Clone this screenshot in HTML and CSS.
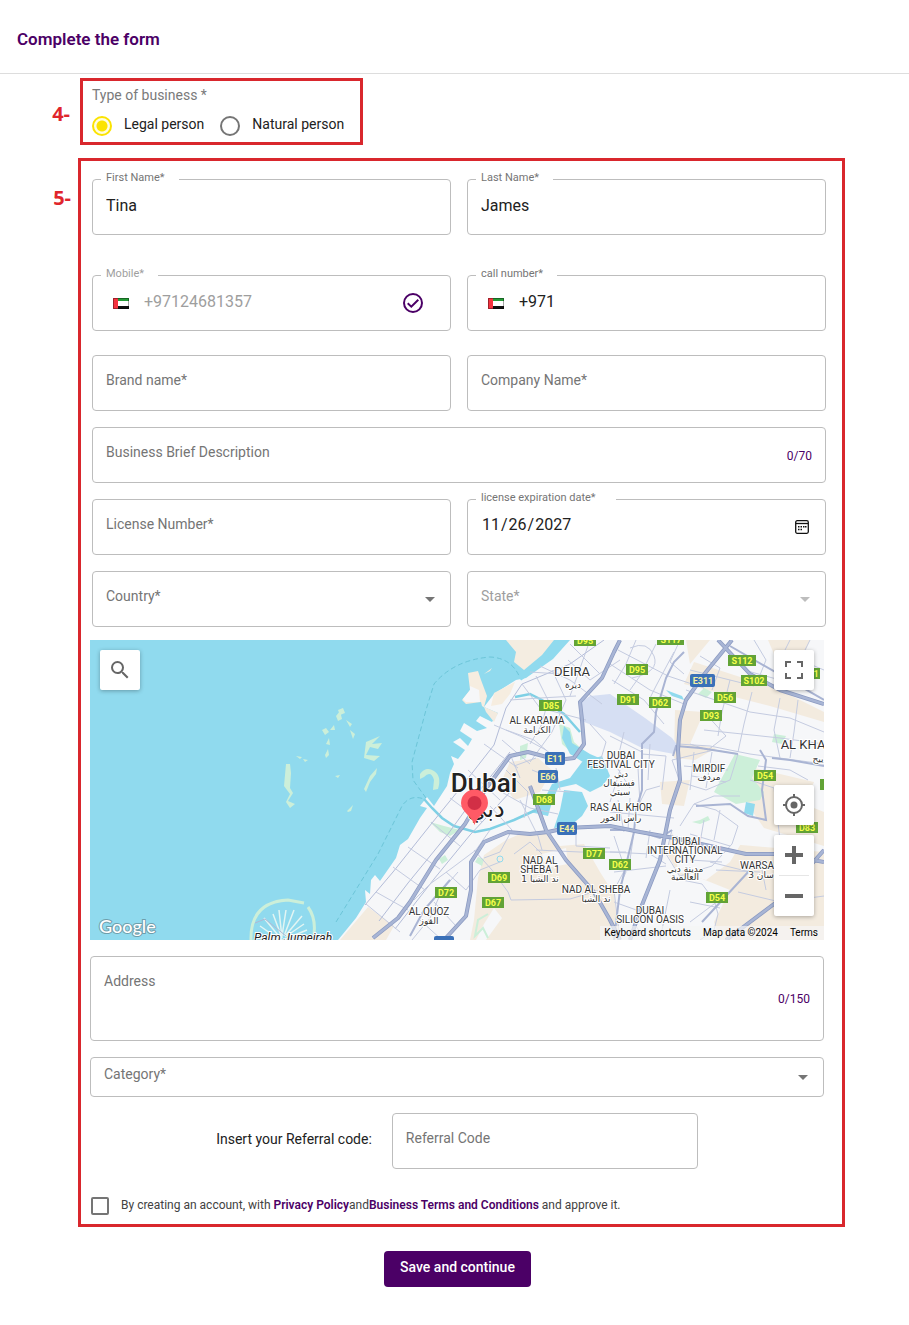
FILE: index.html
```html
<!DOCTYPE html>
<html lang="en">
<head>
<meta charset="utf-8">
<meta name="viewport" content="width=device-width, initial-scale=1">
<title>Complete the form</title>
<link rel="stylesheet" href="styles.css">
</head>
<body>
<header class="page-header"><h1>Complete the form</h1></header>
<form class="page">
  <section class="step step-type">
    <span class="marker">4-</span>
    <div class="frame type-frame" role="radiogroup" aria-labelledby="type-title">
      <p class="type-title" id="type-title">Type of business *</p>
      <div class="radios">
        <label class="radio"><input type="radio" name="type" checked><span>Legal person</span></label>
        <label class="radio"><input type="radio" name="type"><span>Natural person</span></label>
      </div>
    </div>
  </section>

  <section class="step step-details">
    <span class="marker">5-</span>
    <div class="frame details-frame">
      <div class="rows">
        <div class="row row-names">
          <div class="field"><label class="floating" for="first">First Name*</label><input id="first" type="text" value="Tina"></div>
          <div class="field"><label class="floating" for="last">Last Name*</label><input id="last" type="text" value="James"></div>
        </div>
        <div class="row row-phones">
          <div class="field disabled"><label class="floating" for="mobile">Mobile*</label>
            <svg class="flag" viewBox="0 0 16 11"><path fill="#fff" d="M0 0h16v11H0z"/><path fill="#249b36" d="M0 0h16v3H0z"/><path fill="#111" d="M0 8h16v3H0z"/><path fill="#f5333f" d="M0 0h5v11H0z"/><path fill="none" stroke="#000" stroke-opacity=".35" d="M.5.5h15v10H.5z"/></svg>
            <input id="mobile" type="tel" value="+97124681357" disabled>
            <svg class="verified" viewBox="0 0 20 20" fill="none" stroke="#4b0066" stroke-width="2"><circle cx="10" cy="10" r="9"/><path d="M4.700 10.300 8.300 13.700 15.300 6.700"/></svg>
          </div>
          <div class="field"><label class="floating" for="call">call number*</label>
            <svg class="flag" viewBox="0 0 16 11"><path fill="#fff" d="M0 0h16v11H0z"/><path fill="#249b36" d="M0 0h16v3H0z"/><path fill="#111" d="M0 8h16v3H0z"/><path fill="#f5333f" d="M0 0h5v11H0z"/><path fill="none" stroke="#000" stroke-opacity=".35" d="M.5.5h15v10H.5z"/></svg>
            <input id="call" type="tel" value="+971">
          </div>
        </div>
        <div class="row">
          <div class="field"><label class="resting" for="brand">Brand name*</label><input id="brand" type="text"></div>
          <div class="field"><label class="resting" for="company">Company Name*</label><input id="company" type="text"></div>
        </div>
        <div class="field"><label class="resting" for="brief">Business Brief Description</label><input id="brief" type="text"><span class="count">0/70</span></div>
        <div class="row">
          <div class="field"><label class="resting" for="license">License Number*</label><input id="license" type="text"></div>
          <div class="field"><label class="floating floating-wide" for="expiry">license expiration date*</label><input id="expiry" type="date" value="2027-11-26">
            <button class="calendar" type="button" aria-label="Choose date"><svg viewBox="0 0 14 14"><rect x=".7" y=".7" width="12.600" height="12.600" rx="1.500" fill="none" stroke="#111" stroke-width="1.300"/><path stroke="#111" stroke-width="1.300" d="M1 3.500h12"/><path fill="#111" d="M5.500 6H7v1.500H5.500zM8 6h1.500v1.500H8zM10 6h1.500v1.500H10zM3 8.800h1.500v1.500H3zM5.500 8.800H7v1.500H5.500zM3 6h1.500v1.500H3z"/></svg></button>
          </div>
        </div>
        <div class="row">
          <div class="field select"><label class="resting" for="country">Country*</label><select id="country"><option></option></select></div>
          <div class="field select disabled"><label class="resting" for="state">State*</label><select id="state" disabled><option></option></select></div>
        </div>
      </div>

      <div class="lower">
        <div class="map">
          <svg class="map-art" viewBox="0 0 734 300" preserveAspectRatio="xMidYMid slice" role="img" aria-label="Map of Dubai">
            <rect width="734" height="300" fill="#90daee"/>
            <!-- mainland -->
            <path fill="#f6f7f9" d="M248 300 266 278 276 262 275 250 280 254 281 240 285 235 290 241 306 218 310 205 318 199 330 178 337 168 330 166 337 157 344 166 357 146 360 133 364 124 361 116 368 119 375 110 363 102 370 98 378 106 382 99 370 91 374 83 387 91 397 88 386 81 390 76 402 82 408 73 394 67 404 54 426 40 436 38 463 19 480 0H734V300z"/>
            <!-- port and breakwaters -->
            <path fill="#f6ede0" d="M404 72 394 67 397 56 391 40 388 31 378 33 380 50 372 60 376 64 391 62 392 66 404 74zM425 42 404 53 401 66 412 64 420 54z"/>
            <path fill="#f6f7f9" d="M380 46 389 50 390 62 376 62 373 59 380 50z"/>
            <path fill="#f4ede1" d="M416 0H464L452 15 434 30 424 22 426 12z"/>
            <path fill="#f4ede1" d="M394 34 402 28 400 31z"/>
            <path fill="none" stroke="#90daee" stroke-width="4" d="M430 39 448 26 472 0"/>
            <!-- sand and desert -->
            <g fill="#f3ebdf">
              <path d="M416 200 430 194 458 192 470 206 494 204 510 232 524 254 530 300H380L384 280 388 238 394 215z"/>
              <path d="M583 192 640 204 734 212V300H630L624 282 640 250 610 238 590 236 576 212z"/>
              <path d="M585 70 614 72 600 104 626 108 605 120 584 118zM420 122 448 118 462 130 450 152 424 160 412 140z"/>
              <path d="M604 22 690 50 734 72V82L680 66 594 44zM664 128 724 142 714 164 734 172V206L674 188 658 165z"/>
              <path d="M278 267 304 286 296 300H250zM394 67 408 73 404 82 396 72zM596 0 620 0 600 24z"/>
              <path d="M570 142 600 140 594 166 572 164zM678 0H720L712 20 690 28z"/>
            </g>
            <path fill="#f6f7f9" d="M582 188 652 202 640 222 616 240 588 232zM452 214 476 208 478 224 456 228zM394 284 404 268 412 278 396 300H386z"/>
            <!-- airport -->
            <path fill="#d6dff3" d="M491 62 500 56 520 54 555 78 582 98 588 106 584 114 552 108 520 92 489 80z"/>
            <!-- parks -->
            <g fill="#ccefd9">
              <path d="M469 84 480 88 484 102 500 116 488 118 472 104zM430 106 438 103 436 118 430 120zM340 182 354 186 370 190 360 196 350 192z"/>
              <path d="M645 114 670 120 662 138 674 152 670 160 646 164 624 152zM608 54 614 48 622 52 616 58zM684 94 696 96 692 104 682 102z"/>
              <path d="M349 219 355 215 358 220 352 224zM388 217 394 219 392 226 385 222zM602 182 610 180 618 176 620 180 610 184z"/>
              <path d="M196 124H200L201 133 200 148 203 153 198 161 205 164 200 168 196 162 200 154 194 146z"/>
              <path d="M330 134q6-8 14-3t4 18l-5 1 1-10q-3-10-10-3l-4 2z"/>
              <path d="M274 149 280 136 287 128 286 134 280 142 276 152zM257 171 263 165 261 171 258 172zM232 90l4-2 3 4-4 3zM240 90l4-5 1 5zM246 76l4-5 2 8-4 2zM235 115l3-6 1 6-3 3zM248 70l5-2 2 5-5 2zM276 102l14-6-8 8 10-1-4 6-8-2-4 8 14 1-6 5-10-3zM256 80l6 4-2 3zM260 90l5 4-2 5zM206 116l6 1-2 2zM213 119l5 1-3 2zM236 104l3-6 1 7zM245 136l5-1-2 3z"/>
            </g>
            <path fill="none" stroke="#ccefd9" stroke-width="2" d="M398 274 388 280 385 296 393 288 398 298"/>
            <!-- creek and lagoons -->
            <g fill="#90daee">
              <path d="M474 86 480 92 482 103 500 114 514 120 514 124 496 124 480 114 472 98zM492 122 512 116 520 136 512 146 500 152 486 144 468 148 462 162 458 176 440 172 452 164 462 144 480 138zM474 150 492 152 498 166 492 176 480 186 464 188 470 170zM656 162 665 164 663 176 654 173zM576 50 592 56 594 60 582 56z"/>
            </g>
            <path fill="none" stroke="#7fd0e5" stroke-width="2.500" d="M425 57 440 54 452 60 474 74 490 92M334 159 342 168 352 178 364 186 385 192 400 189 424 180 446 170"/>
            <circle cx="410" cy="219" r="3" fill="none" stroke="#90daee"/>
            <!-- minor roads -->
            <g fill="none" stroke="#c4cbe0">
              <path stroke="#b3bcd8" d="M275 265 303 232 342 183 372 146 404 105 416 68 432 44 480 24 514 0M289 281 318 243 358 194 390 150 420 112M305 289 344 239 380 195 422 150"/>
              <path d="M303 227 335 250M318 207 350 229M286 252 318 270M276 264 310 292M341 182 370 206M360 158 392 182M378 130 410 160M394 104 428 128M330 280 352 300M344 262 366 286M356 232 376 250 390 230 410 222"/>
              <path d="M368 232 352 250 340 278 322 300M384 210 402 230 418 252 421 260 480 259 510 250M324 260 340 244 362 228 386 210 400 190M408 150 440 168 468 174M416 130 438 152 434 178M420 60 450 58 486 56M432 44 450 68 496 80M446 36 458 60 452 84 440 104M462 30 476 60 462 92 440 122M478 20 500 40 530 20M450 26 480 40 512 64M416 90 444 100 468 120M480 4 510 34M440 32 470 34M500 0 488 34 480 56"/>
              <path d="M404 85 430 96 456 110M412 100 440 124M420 114 430 138M400 166 422 190 410 212 394 218M430 160 448 196 452 210M442 130 462 138M424 126 446 118M466 128 470 150M452 150 480 152"/>
              <path d="M520 24 560 50 594 64M528 10 578 36 614 48M522 40 554 60 574 84M546 0 536 24 524 44M566 4 550 36 540 50M584 12 566 46 560 58M590 0 580 22 594 34M540 8q18-8 24 8t-22 22"/>
              <path d="M596 50 660 72 700 78 734 92M614 72 636 96 618 110 600 104M662 52 654 84 648 112M640 40 632 72 628 96M690 58 684 90 690 118M708 60 704 92 700 118M600 30 664 46M636 10 654 30 690 40M610 16 630 28 622 50M664 0 676 20 668 40M700 0 690 20 716 36M720 0 710 20 734 30M614 90 690 98 734 104M588 104 620 106 660 114 734 124"/>
              <path d="M582 120 624 110 648 114 640 140 616 150 590 142zM552 114 576 116 572 150M560 104 558 140M534 92 526 126 540 148M520 96 552 112M594 126 638 130M604 112 600 150M622 112 616 148M602 136 636 142M530 130 520 162M548 128 550 164M500 84 516 102 510 122M668 126 700 130 718 140M660 140 684 148 690 200"/>
              <path d="M528 160 534 192M540 158 538 190M520 172 584 178M546 170 556 150 570 146M486 192 486 206 520 208M524 196 536 232 528 250M544 192 540 220 524 250 530 300M560 190 556 218M524 232 576 226M520 212 560 214 576 224M452 214 440 202 424 214M446 210 490 212 536 212M582 190 576 214 592 240 612 244 624 260 628 274 624 290 610 300M590 186 604 164 626 170 648 186 642 204 622 226 590 236M604 164 624 156 650 156M600 194 640 206M614 180 608 214M630 170 624 200M600 220 632 222M620 222 660 232M626 230 670 232M640 252 600 282M648 252 690 262 734 256M670 220 676 250M600 262 630 268M524 262 552 272M540 278 556 300M580 250 570 300"/>
            </g>
            <g fill="none" stroke="#a9b4d3" stroke-width="2">
              <path d="M552 109V104L564 92 566 72 576 38 584 22 594 12M682 118 700 120 734 126M606 166 640 164 658 176 676 180 672 150 676 120 670 110M520 190 544 190 570 198 582 190M552 110 552 150 546 170 544 192 530 250 524 300M320 296 334 270 360 240M583 116 586 106 610 108 648 114M640 6 734 60M612 282 660 230"/>
            </g>
            <!-- highways -->
            <g fill="none" stroke="#8b9ac1" stroke-width="4" stroke-linejoin="round">
              <path d="M283 298 308 278 320 262 346 220 375 184 395 150 420 116 438 112 468 120 484 118 494 104 492 80 490 62 512 38 524 12 530 0"/>
              <path d="M354 300 376 276 381 250 381 222 394 202 418 192 440 194 458 192 476 188 520 186 550 192 584 198 620 206 656 214 690 214 734 222M440 146 456 190 476 220 504 252 520 280 530 300M642 0 616 32 596 60 590 80 588 110 590 140 580 170 570 220 550 270 540 300M628 0 660 34 690 50 734 64M636 300 692 258 734 210"/>
            </g>
            <g fill="none" stroke="#a8b5d5" stroke-width="2.500" stroke-linejoin="round">
              <path d="M283 298 308 278 320 262 346 220 375 184 395 150 420 116 438 112 468 120 484 118 494 104 492 80 490 62 512 38 524 12 530 0"/>
              <path d="M354 300 376 276 381 250 381 222 394 202 418 192 440 194 458 192 476 188 520 186 550 192 584 198 620 206 656 214 690 214 734 222M440 146 456 190 476 220 504 252 520 280 530 300M642 0 616 32 596 60 590 80 588 110 590 140 580 170 570 220 550 270 540 300M628 0 660 34 690 50 734 64M636 300 692 258 734 210"/>
            </g>
            <!-- ferry line -->
            <path fill="none" stroke="#6cc5d8" stroke-dasharray="5 3" d="M246 282 288 214 312 166Q320 154 334 159M336 158 323 140 322 122 336 70 344 44Q364 20 400 17 422 18 430 38"/>
            <!-- palm -->
            <g fill="none" stroke="#ccefd9" stroke-width="3">
              <path d="M161 300Q160 262 198 260L214 263M218 267Q226 278 224 294"/>
              <path stroke="#e2f5f3" stroke-width="1.500" d="M192 300 174 278M192 298 183 274M192 298 189 270M192 296 196 270M194 296 204 270M195 296 212 276M195 297 214 284M195 299 217 290M190 300 170 286M188 300 168 294"/>
              <path stroke="#b0b8d4" stroke-width="1" d="M165 283 175 279 196 296"/>
            </g>
            <!-- road shields -->
            <g fill="#62a336">
              <path d="M484-4h22v10h-22zM567-5h27v10h-27zM638 15h28v11h-28zM536 24h22v11h-22zM527 54h22v11h-22zM559 57h22v11h-22zM651 35h26v11h-26zM624 52h22v11h-22zM610 70h22v11h-22zM449 60h23v11h-23zM664 130h22v11h-22zM722 28h8v11h-8zM730 139h8v11h-8zM443 154h22v11h-22zM493 208h22v11h-22zM519 219h22v11h-22zM706 182h22v11h-22zM398 232h22v11h-22zM345 247h22v11h-22zM392 257h22v11h-22zM616 252h22v11h-22z"/>
            </g>
            <g fill="#3a70b8"><rect x="600" y="34" width="25" height="13" rx="2"/><rect x="455" y="112" width="20" height="13" rx="2"/><rect x="448" y="130" width="20" height="13" rx="2"/><rect x="467" y="182" width="20" height="13" rx="2"/><rect x="344" y="296" width="20" height="13" rx="2"/></g>
            <g class="shield">
              <text x="495" y="4">D95</text><text x="581" y="3">S117</text><text x="652" y="24">S112</text><text x="547" y="33">D95</text><text x="538" y="63">D91</text><text x="570" y="66">D62</text><text x="664" y="44">S102</text><text x="635" y="61">D56</text><text x="621" y="79">D93</text><text x="461" y="69">D85</text><text x="675" y="139">D54</text><text x="726" y="37">1</text><text x="454" y="163">D68</text><text x="504" y="217">D77</text><text x="530" y="228">D62</text><text x="717" y="191">D83</text><text x="409" y="241">D69</text><text x="356" y="256">D72</text><text x="403" y="266">D67</text><text x="627" y="261">D54</text>
              <g class="shield-blue"><text x="613" y="44">E311</text><text x="465" y="122">E11</text><text x="458" y="140">E66</text><text x="477" y="192">E44</text></g>
            </g>
            <g class="place">
              <text class="place-lg" x="482" y="36">DEIRA</text><text class="arabic" x="483" y="48">ديرة</text>
              <text x="447" y="84">AL KARAMA</text><text class="arabic" x="447" y="93">الكرامة</text>
              <text x="531" y="119">DUBAI</text><text x="531" y="128">FESTIVAL CITY</text><text class="arabic" x="531" y="137">دبي</text><text class="arabic" x="529" y="146">فستيفال</text><text class="arabic" x="530" y="155">سيتي</text>
              <text x="619" y="132">MIRDIF</text><text class="arabic" x="619" y="140">مردف</text>
              <text class="place-lg" x="713" y="109">AL KHA</text><text class="arabic" x="728" y="122">ييح</text>
              <text x="531" y="171">RAS AL KHOR</text><text class="arabic" x="531" y="181">رأس الخور</text>
              <text x="596" y="205">DUBAI</text><text x="595" y="214">INTERNATIONAL</text><text x="595" y="223">CITY</text><text class="arabic" x="595" y="232">مدينة دبي</text><text class="arabic" x="595" y="240">العالمية</text>
              <text x="450" y="224">NAD AL</text><text x="450" y="233">SHEBA 1</text><text class="arabic" x="450" y="242">ند الشبا 1</text>
              <text x="506" y="253">NAD AL SHEBA</text><text class="arabic" x="506" y="262">ند الشبا</text>
              <text x="667" y="229">WARSA</text><text class="arabic" x="671" y="238">سان 3</text>
              <text x="339" y="275">AL QUOZ</text><text class="arabic" x="339" y="284">القوز</text>
              <text x="560" y="274">DUBAI</text><text x="560" y="283">SILICON OASIS</text>
              <text class="palm" x="203" y="302">Palm Jumeirah</text>
              <text class="city" x="394" y="152">Dubai</text><text class="city-arabic" x="396" y="177">دبي</text>
            </g>
            <path fill="#ff5a66" d="M384.500 185C382 176 371 172 371 163a13.500 13.500 0 0 1 27 0c0 9-11 13-13.500 22z"/><circle cx="384.500" cy="163" r="7" fill="#d22f46"/>
            <text class="google" x="9" y="293">Google</text>
          </svg>
          <button class="map-button map-search" type="button" aria-label="Search"><svg viewBox="0 0 24 24" fill="#666"><path d="M15.500 14h-.79l-.28-.27A6.470 6.470 0 0 0 16 9.500 6.500 6.500 0 1 0 9.500 16c1.610 0 3.090-.59 4.230-1.570l.27.28v.79l5 4.990L20.490 19l-4.990-5zm-6 0C7.010 14 5 11.990 5 9.500S7.010 5 9.500 5 14 7.010 14 9.500 11.990 14 9.500 14z"/></svg></button>
          <button class="map-button map-fullscreen" type="button" aria-label="Toggle fullscreen"><svg viewBox="0 0 18 18" fill="#666"><path d="M0 0h6v2H2v4H0zM12 0h6v6h-2V2h-4zM0 12h2v4h4v2H0zM16 12h2v6h-6v-2h4z"/></svg></button>
          <div class="map-tools">
            <button class="map-button" type="button" aria-label="My location"><svg viewBox="0 0 24 24" fill="none" stroke="#666" stroke-width="2"><circle cx="12" cy="12" r="8"/><circle cx="12" cy="12" r="3.500" fill="#666" stroke="none"/><path d="M12 1v4M12 19v4M1 12h4M19 12h4"/></svg></button>
            <div class="zoom">
              <button type="button" aria-label="Zoom in"><svg viewBox="0 0 18 18" fill="#666"><path d="M7 0h4v7h7v4h-7v7H7v-7H0V7h7z"/></svg></button>
              <button type="button" aria-label="Zoom out"><svg viewBox="0 0 18 18" fill="#666"><path d="M0 7h18v4H0z"/></svg></button>
            </div>
          </div>
          <div class="attribution"><button type="button">Keyboard shortcuts</button><span>Map data ©2024</span><a href="#">Terms</a></div>
        </div>
        <div class="field field-tall"><label class="resting" for="address">Address</label><textarea id="address"></textarea><span class="count">0/150</span></div>
        <div class="field field-short select"><label class="resting" for="category">Category*</label><select id="category"><option></option></select></div>
        <div class="referral">
          <label for="referral">Insert your Referral code:</label>
          <div class="field"><input id="referral" type="text" placeholder="Referral Code"></div>
        </div>
        <div class="consent">
          <input id="agree" type="checkbox">
          <label for="agree">By creating an account, with <a href="#">Privacy Policy</a>and<a href="#">Business Terms and Conditions</a> and approve it.</label>
        </div>
      </div>
    </div>
  </section>
  <div class="actions"><button class="save" type="submit">Save and continue</button></div>
</form>
</body>
</html>
```

FILE: styles.css
```css
* { box-sizing: border-box; }
body { margin: 0; background: #fff; color: #212121; font: 14px/18px Roboto, "Liberation Sans", sans-serif; }
button, input, select, textarea { margin: 0; padding: 0; border: 0; background: none; color: inherit; font: inherit; outline: 0; }
button { cursor: pointer; }
a { color: #4b0066; text-decoration: none; }
svg { display: block; }

.page-header { padding: 28px 17px 22px; border-bottom: 1px solid #ddd; }
h1 { margin: 0; color: #4b0066; font-size: 17px; line-height: 23px; font-weight: 600; }
.page { padding: 4px 64px 38px 0; }

.step { display: grid; grid-template-columns: 78px minmax(0, 1fr); }
.step-type { margin-bottom: 13px; }
.marker { padding-right: 7px; text-align: right; color: #e0252c; font: bold 20px/24px "Open Sans", "Noto Sans", sans-serif; }
.step-type .marker { padding: 24px 8px 0 0; }
.step-details .marker { padding-top: 28px; }
.frame { border: 3px solid #d9272d; }

.type-frame { justify-self: start; margin-left: 2px; padding: 5px 16px 6px 9px; }
.type-title { margin: 0; color: #7a7a7a; line-height: 18px; }
.radios { display: flex; gap: 16px; padding-top: 12px; }
.radio { display: flex; align-items: center; gap: 12px; }
.radio span { padding-bottom: 4px; line-height: 16px; }
.radio input { appearance: none; width: 20px; height: 20px; border: 2px solid #757575; border-radius: 50%; }
.radio input:checked { border-color: #fbe300; background: radial-gradient(circle, #fbe300 5px, #fffde0 6px); }

.details-frame { padding: 18px 16px 9px 9px; }
.rows { display: grid; gap: 16px; padding-left: 2px; }
.row { display: grid; grid-template-columns: 1fr 1fr; gap: 16px; }
.row-names { margin-bottom: 24px; }
.row-phones { margin-bottom: 8px; }
.lower { display: grid; gap: 16px; padding: 13px 2px 0 0; }

.field { position: relative; display: flex; align-items: center; height: 56px; border: 1px solid #bdbdbd; border-radius: 4px; }
.field input, .field select, .field textarea { flex: 1; min-width: 0; height: 100%; padding: 0 13px 4px; font-size: 16px; }
.field select { appearance: none; }
.field textarea { padding-top: 16px; resize: none; }
.field-tall { height: 85px; }
.field-short { height: 40px; }
.floating { position: absolute; top: -9px; left: 8px; padding: 0 14px 0 5px; background: #fff; color: #757575; font-size: 11px; line-height: 14px; }
.floating-wide { padding-right: 20px; }
.resting { position: absolute; top: 15px; left: 13px; color: #757575; }
.field-short .resting { top: 7px; }
.disabled .resting, .disabled .floating, .disabled input { color: #9e9e9e; }
.field input::placeholder { color: #757575; opacity: 1; font-size: 14px; }
.field input::-webkit-calendar-picker-indicator { display: none; }
.count { padding: 2px 13px 0 0; color: #4b0066; font-size: 12px; }
.field-tall .count { padding-top: 0; }
.flag { width: 16px; height: 11px; margin-left: 20px; }
.field .flag + input { padding-left: 15px; }
.verified { width: 20px; height: 20px; margin-right: 27px; }
.calendar { margin-right: 16px; }
.calendar svg { width: 14px; height: 14px; }
.select::after { content: ""; position: absolute; top: calc(50% - 2px); right: 15px; border: 5px solid transparent; border-top-color: #757575; border-bottom: 0; pointer-events: none; }
.select.disabled::after { border-top-color: #bdbdbd; }

.map { position: relative; height: 300px; overflow: hidden; }
.map-art { width: 100%; height: 100%; }
.map-art text { text-anchor: middle; font-family: Roboto, sans-serif; }
.shield text { font-size: 9px; font-weight: bold; fill: #f5ff4a; }
.shield .shield-blue text { fill: #f5f0a0; }
.place text { font-size: 10px; fill: #333; stroke: #fff; stroke-width: 2px; paint-order: stroke; }
.place .place-lg { font-size: 13px; }
.place .arabic { font-size: 9px; font-family: "DejaVu Sans", sans-serif; }
.place .palm { font-size: 12px; font-style: italic; fill: #222; }
.place .city { font-size: 26px; font-weight: 500; fill: #222; }
.place .city-arabic { font: 24px "DejaVu Sans", sans-serif; fill: #222; }
.map-art .google { text-anchor: start; font: 500 18px Lato, sans-serif; fill: #fff; stroke: #6f9daa; stroke-width: 2px; paint-order: stroke; }
.map-button, .zoom { display: grid; place-items: center; width: 40px; border-radius: 2px; background: #fff; box-shadow: 0 1px 4px rgba(0, 0, 0, .3); }
.map-button { height: 40px; }
.map-button svg { width: 24px; height: 24px; }
.map-search { position: absolute; top: 10px; left: 10px; }
.map-fullscreen { position: absolute; top: 10px; right: 10px; }
.map-fullscreen svg, .zoom svg { width: 18px; height: 18px; }
.map-tools { position: absolute; right: 10px; bottom: 24px; display: grid; gap: 10px; }
.zoom button { display: grid; place-items: center; width: 30px; height: 40px; }
.zoom button + button { height: 41px; border-top: 1px solid #e6e6e6; }
.attribution { position: absolute; right: 0; bottom: 0; display: flex; gap: 12px; padding: 0 6px 0 4px; background: rgba(245, 245, 245, .7); color: #000; font-size: 10px; line-height: 14px; }
.attribution a { color: #000; }

.referral { display: flex; align-items: center; justify-content: center; gap: 20px; }
.referral > label { padding-bottom: 4px; }
.referral .field { width: 306px; }
.referral input { padding-bottom: 7px; }
.consent { display: flex; gap: 12px; padding: 12px 0 0 1px; color: #424242; font-size: 12px; line-height: 16px; }
.consent input { appearance: none; flex: none; width: 18px; height: 18px; border: 2px solid #757575; border-radius: 2px; }
.consent input:checked { background: #4b0066; }
.consent a { font-weight: 600; }

.actions { display: flex; justify-content: center; padding: 24px 8px 0 78px; }
.save { height: 36px; padding: 0 16px 4px; border-radius: 4px; background: #4b0066; color: #fff; font-weight: 500; }
```
